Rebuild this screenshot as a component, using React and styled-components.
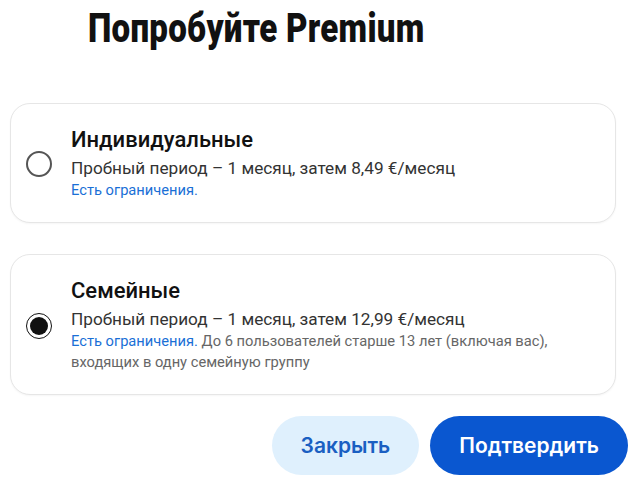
import styled, { createGlobalStyle } from "styled-components";

const GlobalStyle = createGlobalStyle`
  body {
    margin: 0;
    background: #fff;
    font-family: Roboto, "Liberation Sans", sans-serif;
  }
`;

const Container = styled.div`
  width: 640px;
  height: 491px;
  overflow: hidden;
`;

const Header = styled.div`
  height: 103px;
  padding-left: 88px;
  padding-top: 4px;
  box-sizing: border-box;
`;

const Title = styled.h1`
  margin: 0;
  display: inline-block;
  font-family: Roboto, sans-serif;
  font-weight: 900;
  font-size: 41px;
  line-height: 48px;
  letter-spacing: 0.3px;
  color: #111;
  transform-origin: left center;
  transform: scaleX(${(p) => p.sx});
  white-space: nowrap;
`;

const Plans = styled.div`
  display: flex;
  flex-direction: column;
  gap: 31px;
  padding-left: 10px;
  width: 606px;
`;

const Card = styled.label`
  display: flex;
  align-items: center;
  height: ${(p) => p.h}px;
  box-sizing: border-box;
  border: 1px solid #e6e6e6;
  border-radius: 20px;
  padding: 0 0 0 15px;
  background: #fff;
  box-shadow: 0 1px 2px rgba(0, 0, 0, 0.04);
`;

const Radio = styled.span`
  flex: none;
  width: 26px;
  height: 26px;
  border-radius: 50%;
  box-sizing: border-box;
  border: ${(p) => (p.checked ? "1.5px solid #111" : "2px solid #555")};
  display: flex;
  align-items: center;
  justify-content: center;
  margin-right: 19px;
  margin-top: 2px;

  &::after {
    content: "";
    display: ${(p) => (p.checked ? "block" : "none")};
    width: 18px;
    height: 18px;
    border-radius: 50%;
    background: #111;
  }
`;

const Info = styled.div`
  display: flex;
  flex-direction: column;
`;

const PlanName = styled.div`
  font-size: 22px;
  font-weight: 500;
  color: #111;
  line-height: 28px;
  margin-bottom: 3px;
`;

const Price = styled.div`
  font-size: 17.2px;
  color: #333;
  line-height: 22px;
`;

const Note = styled.div`
  font-size: 14.7px;
  color: #666;
  line-height: 21px;
  margin-top: 1px;
`;

const Link = styled.a`
  color: #1a6fd6;
  text-decoration: none;
`;

const Actions = styled.div`
  display: flex;
  justify-content: flex-end;
  gap: 11px;
  padding: 21px 12px 0 0;
`;

const Button = styled.button`
  height: 59px;
  border: none;
  border-radius: 30px;
  padding: 0 29px;
  font-family: Inter, Roboto, sans-serif;
  font-size: 21px;
  font-weight: 600;
  background: ${(p) => (p.primary ? "#0a57d0" : "#dff0fd")};
  color: ${(p) => (p.primary ? "#fff" : "#1a5fc2")};
  cursor: pointer;
`;

export default function App() {
  return (
    <Container>
      <GlobalStyle />
      <Header>
        <Title sx={0.808}>Попробуйте Premium</Title>
      </Header>
      <Plans>
        <Card h={120}>
          <Radio />
          <Info>
            <PlanName>Индивидуальные</PlanName>
            <Price>Пробный период – 1 месяц, затем 8,49 €/месяц</Price>
            <Note>
              <Link href="#">Есть ограничения.</Link>
            </Note>
          </Info>
        </Card>
        <Card h={141}>
          <Radio checked />
          <Info>
            <PlanName>Семейные</PlanName>
            <Price>Пробный период – 1 месяц, затем 12,99 €/месяц</Price>
            <Note>
              <Link href="#">Есть ограничения.</Link> До 6 пользователей старше 13 лет (включая вас),
              <br />
              входящих в одну семейную группу
            </Note>
          </Info>
        </Card>
      </Plans>
      <Actions>
        <Button>Закрыть</Button>
        <Button primary>Подтвердить</Button>
      </Actions>
    </Container>
  );
}
